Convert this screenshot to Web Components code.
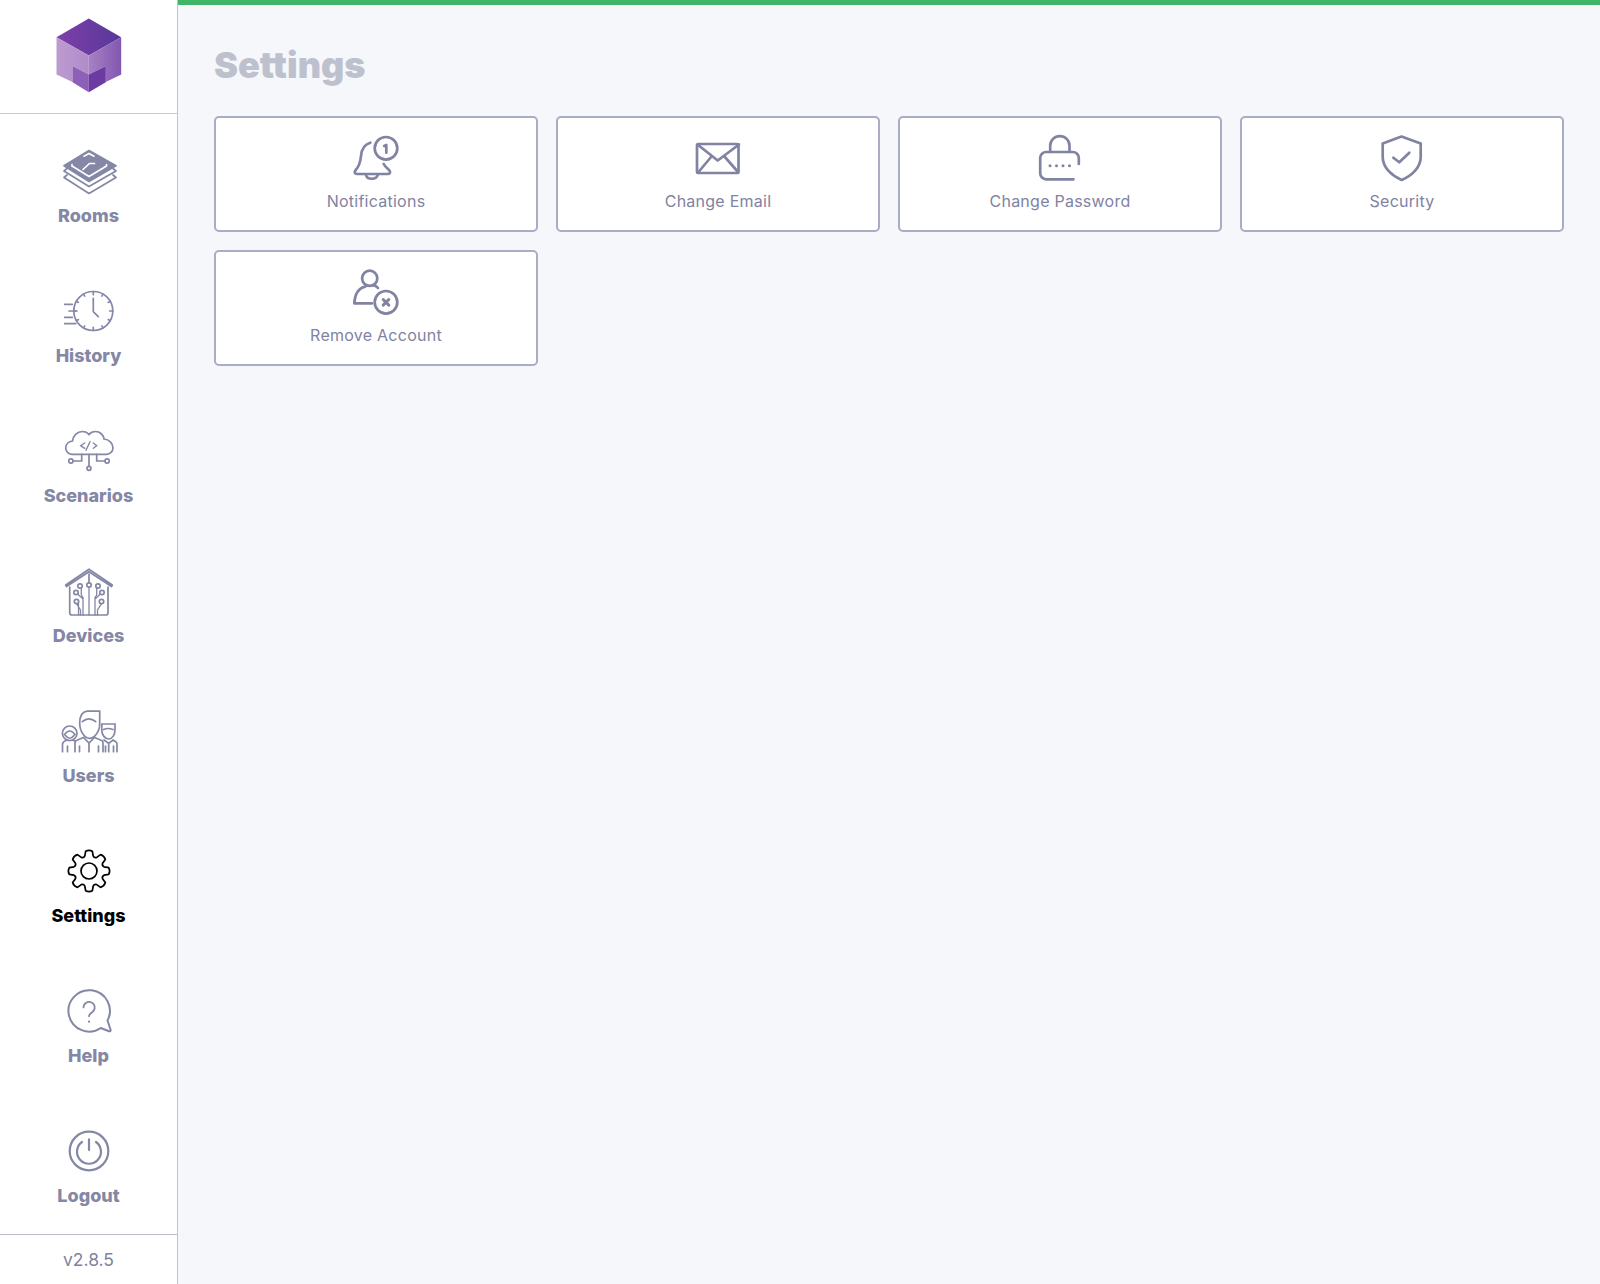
<!DOCTYPE html>
<html lang="en">
<head>
<meta charset="utf-8">
<title>Settings</title>
<style>
  html, body { margin: 0; height: 100%; background: #f5f7fb; }
  body { font-family: Inter, "Liberation Sans", sans-serif; }
</style>
</head>
<body>
<app-shell>
  <side-nav slot="nav" version="v2.8.5">
    <nav-item icon="rooms">Rooms</nav-item>
    <nav-item icon="history">History</nav-item>
    <nav-item icon="scenarios">Scenarios</nav-item>
    <nav-item icon="devices">Devices</nav-item>
    <nav-item icon="users">Users</nav-item>
    <nav-item icon="settings" active>Settings</nav-item>
    <nav-item icon="help">Help</nav-item>
    <nav-item icon="logout">Logout</nav-item>
  </side-nav>
  <settings-page title-text="Settings">
    <settings-card icon="bell">Notifications</settings-card>
    <settings-card icon="mail">Change Email</settings-card>
    <settings-card icon="lock">Change Password</settings-card>
    <settings-card icon="shield">Security</settings-card>
    <settings-card icon="remove">Remove Account</settings-card>
  </settings-page>
</app-shell>

<script>
  // 8 rounded teeth around (32,32)
  function gearPath() {
    const pt = (r, a) => `${(32 + r * Math.sin(a)).toFixed(2)} ${(32 - r * Math.cos(a)).toFixed(2)}`;
    let d = "";
    for (let i = 0; i < 8; i++) {
      const a = (i * Math.PI) / 4;
      const w = 0.17, v = 0.27;
      d += `${i ? "L" : "M"}${pt(15.6, a - v)} L${pt(20, a - w)} Q${pt(21.6, a)} ${pt(20, a + w)} L${pt(15.6, a + v)} `;
      d += `Q${pt(13.8, a + Math.PI / 8)} ${pt(15.6, a + Math.PI / 4 - v)} `;
    }
    return d + "Z";
  }

  function clockTicks() {
    let out = "";
    for (let i = 0; i < 12; i++) {
      const a = (i * Math.PI) / 6, s = Math.sin(a), c = Math.cos(a);
      const l = i % 3 == 0 ? 16.4 : 17.2;
      out += `<path d="M${36.3 + 19.5 * s} ${32 - 19.5 * c}L${36.3 + l * s} ${32 - l * c}"/>`;
    }
    return out;
  }

  const NAV_ICONS = {
    rooms: `<path d="M32 11.5 59 26.7 32 42.5 7 26.7Z" fill="currentColor" stroke-linejoin="round"/>
      <path d="M27 17.2 32 14.5 37 17.2M15 25.5V27L32 37.5 49.5 27V25.5M26 30.5 32.5 24.5H37.5" stroke="#fff" stroke-width="1.7"/>
      <path d="M10 29.5 7 32 32 47.5 59 32 56 29.5M10 36 7 38.5 32 54.5 59 38.5 56 36" stroke-linejoin="round"/>`,
    history: `<circle cx="36.3" cy="32" r="19.5"/>${clockTicks()}
      <path d="M36.3 19.3V32.7L41.3 37.7M7.7 25.3H15.3M12 32H19M7.7 38.3H15.3M7.7 44.7H18.7"/>`,
    scenarios: `<path d="M15 35.3C10.5 35.3 8.7 31.5 8.7 29 8.7 25 12 22.5 15.5 22 16 17 20 12.5 25.5 12.5 28 12.5 30.5 13.5 32 15.5 34 13 36.5 12.5 38.5 12.5 43 12.5 46.5 16 47 20 52 20.5 56 24 56 29 56 32.5 53 35.3 49.5 35.3Z"/>
      <path d="M27.7 24 23.7 26.7 27.7 29.3M33 22.7 29 31.3M36.3 24 39.7 26.7 36.3 29.3" stroke-width="1.4"/>
      <path d="M32 35.3V47.3M24.7 35.3V42H16M39.7 35.3V42H48"/>
      <circle cx="32" cy="49.3" r="2"/><circle cx="13.9" cy="42" r="2.1"/><circle cx="50.1" cy="42" r="2.1"/>`,
    devices: `<path d="M9.5 27.5 8.7 26 32 10.3 55.3 26 54.5 27.5 32 12.8Z" stroke-linejoin="round"/>
      <path d="M12.7 28V53.5Q12.7 56 15 56H49Q51 56 51 53.5V28M32 15V24"/>
      <circle cx="32" cy="26" r="2.2"/><circle cx="23" cy="27" r="2.2"/><circle cx="41" cy="27" r="2.2"/>
      <circle cx="19" cy="33.5" r="2.2"/><circle cx="45" cy="33.5" r="2.2"/><circle cx="19.5" cy="42.5" r="2.2"/><circle cx="44.5" cy="42.5" r="2.2"/>
      <path d="M32 28.2V56M26 56V38.5L24.3 36 24.3 29M38 56V38.5L39.7 36V29M21.5 56V44.5M19.5 44.7 23.5 51V56M44.5 44.7 40.5 51V56M20.5 35 26 40M43.5 35 38 40" stroke-width="1.3"/>`,
    users: `<path d="M22.7 24C22.7 17 25 13 30 12.2H42.7V25C42.7 33 37 39.3 32.5 39.3 28 39.3 22.7 33 22.7 24Z"/>
      <path d="M25.3 22.7Q32 17 38.7 22.7"/>
      <path d="M18 52.7V44Q18 41.5 20.5 41L26.5 38.5 32 44 37.5 38.5 43.5 41Q46 41.5 46 44V52.7M32 44V52.7M22.5 47V52.7M41.5 47V52.7"/>
      <path d="M5.5 52.7V45.5Q5.5 43 8 42L10.5 41M15.5 41 18 42M10.5 47V52.7"/>
      <circle cx="12.7" cy="34.3" r="7.3"/><path d="M7.5 35.5Q12.7 28.5 18 35.5M8.5 36.5Q12.7 42 17 36.5"/>
      <path d="M44.8 25H58V31C58 36 55 40 51.7 40 48 40 44.8 36 44.8 31Z"/><path d="M46.5 30.5Q51 28.5 56 30.5"/>
      <path d="M47 41 51.7 44.5 56 41 58.5 42.5Q60 43.5 60 45V52.7M51.7 44.5V52.7M56.5 47V52.7M48.5 47V52.7"/>`,
    settings: `<path d="${gearPath()}" stroke-linejoin="round"/><circle cx="32" cy="32" r="8"/>`,
    help: `<path d="M43.8 49A20.7 20.7 0 1 1 50.5 41.5L53.5 50.5Q54 52.7 52 52.2Z" stroke-width="2" stroke-linejoin="round"/>
      <path d="M26.5 28.5A5.6 5.6 0 1 1 35.5 33C33 34.7 32 35.5 32 37.3" stroke-width="1.7"/>
      <circle cx="32" cy="42.7" r="1.1" fill="currentColor" stroke="none"/>`,
    logout: `<circle cx="32" cy="32" r="19.3" stroke-width="2.2"/>
      <path d="M25 23A12 12 0 1 0 39 23M32 20.3V31" stroke-width="2.2"/>`,
  };

  const CARD_ICONS = {
    bell: `<path d="M18.3 8.7C12 10.5 9.5 16 9 22 8.5 27 7.5 32 3.7 36 1.5 38.5 3 40 5 40H36C38 40 38.8 38 37.3 36.3 35 34 33 32.5 31.7 30"/>
      <path d="M14 41C15 46 24.5 46 25.7 41"/><circle cx="34" cy="14.3" r="11.3"/>
      <path d="M32.2 12 34.3 11V18.7"/>`,
    mail: `<rect x="3" y="10" width="41.5" height="29" rx="1.5"/>
      <path d="M3.5 10.5 23.7 26.5 45 10.5M4.5 38 17.5 22.5M44 38 30.5 22.5"/>`,
    lock: `<path d="M42.8 30V24A6 6 0 0 0 36.8 18H10.2A6 6 0 0 0 4.2 24V39.3A6 6 0 0 0 10.2 45.3H37.5"/>
      <path d="M14.2 18V11.7A9.65 9.65 0 0 1 33.5 11.7V18"/>
      <g fill="currentColor" stroke="none"><circle cx="14" cy="31.7" r="1.5"/><circle cx="20.5" cy="31.7" r="1.5"/><circle cx="27" cy="31.7" r="1.5"/><circle cx="33.5" cy="31.7" r="1.5"/></g>`,
    shield: `<path d="M23.5 2.5 42.7 9.5V23C42.7 34 33 42 23.7 46 14.5 42 4.7 34 4.7 23V9.5Z" stroke-linejoin="round"/>
      <path d="M15.3 23.7 21.3 28.3 31.3 18.7"/>`,
    remove: `<circle cx="17.7" cy="10.3" r="7.6"/>
      <path d="M13.5 18.5C7 20 2.8 26 2.3 35.3H20M21.5 17C23.5 17.8 25 18.8 26 20"/>
      <circle cx="34" cy="34.3" r="11.3"/><path d="M31.2 31.5 36.8 37.1M36.8 31.5 31.2 37.1" stroke-width="3"/>`,
  };

  customElements.define(
    "app-shell",
    class extends HTMLElement {
      constructor() {
        super().attachShadow({ mode: "open" });
        this.shadowRoot.innerHTML = /*html*/ `
          <style>
            :host { display: flex; height: 1284px; width: 1600px; overflow: hidden; background: #f5f7fb; }
            main { flex: 1; min-width: 0; display: flex; flex-direction: column; }
            .progress { height: 4.5px; background: #3fb565; flex: none; }
          </style>
          <slot name="nav"></slot>
          <main>
            <div class="progress"></div>
            <slot></slot>
          </main>
        `;
      }
    }
  );

  customElements.define(
    "side-nav",
    class extends HTMLElement {
      constructor() {
        super().attachShadow({ mode: "open" });
      }

      connectedCallback() {
        this.shadowRoot.innerHTML = /*html*/ `
          <style>
            :host {
              display: flex;
              flex-direction: column;
              flex: none;
              width: 178px;
              box-sizing: border-box;
              height: 100%;
              background: #fff;
              border-right: 1.5px solid #c0c2d4;
            }
            header {
              flex: none;
              height: 114px;
              box-sizing: border-box;
              border-bottom: 1.5px solid #c9c9d1;
              display: flex;
              justify-content: center;
              padding-top: 18px;
            }
            nav {
              flex: 1;
              display: flex;
              flex-direction: column;
              gap: 49px;
              padding-top: 25px;
            }
            footer {
              flex: none;
              height: 50px;
              box-sizing: border-box;
              border-top: 1.5px solid #bcbdca;
              display: flex;
              align-items: center;
              justify-content: center;
              font-size: 17.5px;
              color: #7f829f;
            }
          </style>
          <header>
            <svg width="66" height="75" viewBox="55.5 17.5 66 75">
              <defs>
                <linearGradient id="top" x1="0" x2="1" y1="0" y2="0">
                  <stop offset="0" stop-color="#7e3fa8"/><stop offset="1" stop-color="#57389a"/>
                </linearGradient>
                <linearGradient id="left" x1="0" x2="1" y1="0" y2="0">
                  <stop offset="0" stop-color="#bd9bd0"/><stop offset="1" stop-color="#b08cc8"/>
                </linearGradient>
                <linearGradient id="right" x1="0" x2="1" y1="0" y2="0">
                  <stop offset="0" stop-color="#a780c4"/><stop offset="1" stop-color="#8258b0"/>
                </linearGradient>
              </defs>
              <path d="M88.3 18 120.7 36.7 88.3 55 56 36.7Z" fill="url(#top)"/>
              <path d="M56 36.7 88.3 55V74L72 65.5V81.5L56 74Z" fill="url(#left)"/>
              <path d="M120.7 36.7V74L105.3 81.5V65.5L88.3 74V55Z" fill="url(#right)"/>
              <path d="M72 65.5 88.3 74V91.7L72 81.7Z" fill="#8e5fb6"/>
              <path d="M105.3 65.5V81.7L88.3 91.7V74Z" fill="#6b3ba1"/>
            </svg>
          </header>
          <nav><slot></slot></nav>
          <footer>${this.getAttribute("version")}</footer>
        `;
      }
    }
  );

  customElements.define(
    "nav-item",
    class extends HTMLElement {
      constructor() {
        super().attachShadow({ mode: "open" });
      }

      connectedCallback() {
        this.shadowRoot.innerHTML = /*html*/ `
          <style>
            :host {
              display: flex;
              flex-direction: column;
              align-items: center;
              color: #8487a5;
              font-size: 18px;
              font-weight: 800;
              line-height: 28px;
            }
            :host([active]) { color: #000; }
            svg { display: block; overflow: visible; fill: none; stroke: currentColor; stroke-width: 1.7; stroke-linecap: round; }
            span { margin-top: -1px; }
          </style>
          <svg width="64" height="64" viewBox="0 0 64 64">${NAV_ICONS[this.getAttribute("icon")]}</svg>
          <span><slot></slot></span>
        `;
      }
    }
  );

  customElements.define(
    "settings-page",
    class extends HTMLElement {
      constructor() {
        super().attachShadow({ mode: "open" });
      }

      connectedCallback() {
        this.shadowRoot.innerHTML = /*html*/ `
          <style>
            :host { display: block; padding: 0 36px; }
            h1 {
              margin: 0;
              padding-top: 38px;
              height: 111.5px;
              box-sizing: border-box;
              font-size: 36px;
              line-height: 44px;
              font-weight: 900;
              color: #bdc1ce;
            }
            .grid {
              display: grid;
              grid-template-columns: repeat(4, 1fr);
              grid-auto-rows: 116px;
              gap: 18px;
            }
          </style>
          <h1>${this.getAttribute("title-text")}</h1>
          <div class="grid"><slot></slot></div>
        `;
      }
    }
  );

  customElements.define(
    "settings-card",
    class extends HTMLElement {
      constructor() {
        super().attachShadow({ mode: "open" });
      }

      connectedCallback() {
        this.shadowRoot.innerHTML = /*html*/ `
          <style>
            :host {
              display: flex;
              flex-direction: column;
              align-items: center;
              box-sizing: border-box;
              padding-top: 16px;
              background: #fff;
              border: 2px solid #aaacc6;
              border-radius: 5px;
              color: #8083a1;
              font-size: 16px;
              letter-spacing: 0.25px;
              line-height: 24px;
            }
            svg { display: block; overflow: visible; fill: none; stroke: currentColor; stroke-width: 2.7; stroke-linecap: round; stroke-linejoin: round; }
            span { margin-top: 7px; }
          </style>
          <svg width="48" height="48" viewBox="0 0 48 48">${CARD_ICONS[this.getAttribute("icon")]}</svg>
          <span><slot></slot></span>
        `;
      }
    }
  );
</script>
</body>
</html>
